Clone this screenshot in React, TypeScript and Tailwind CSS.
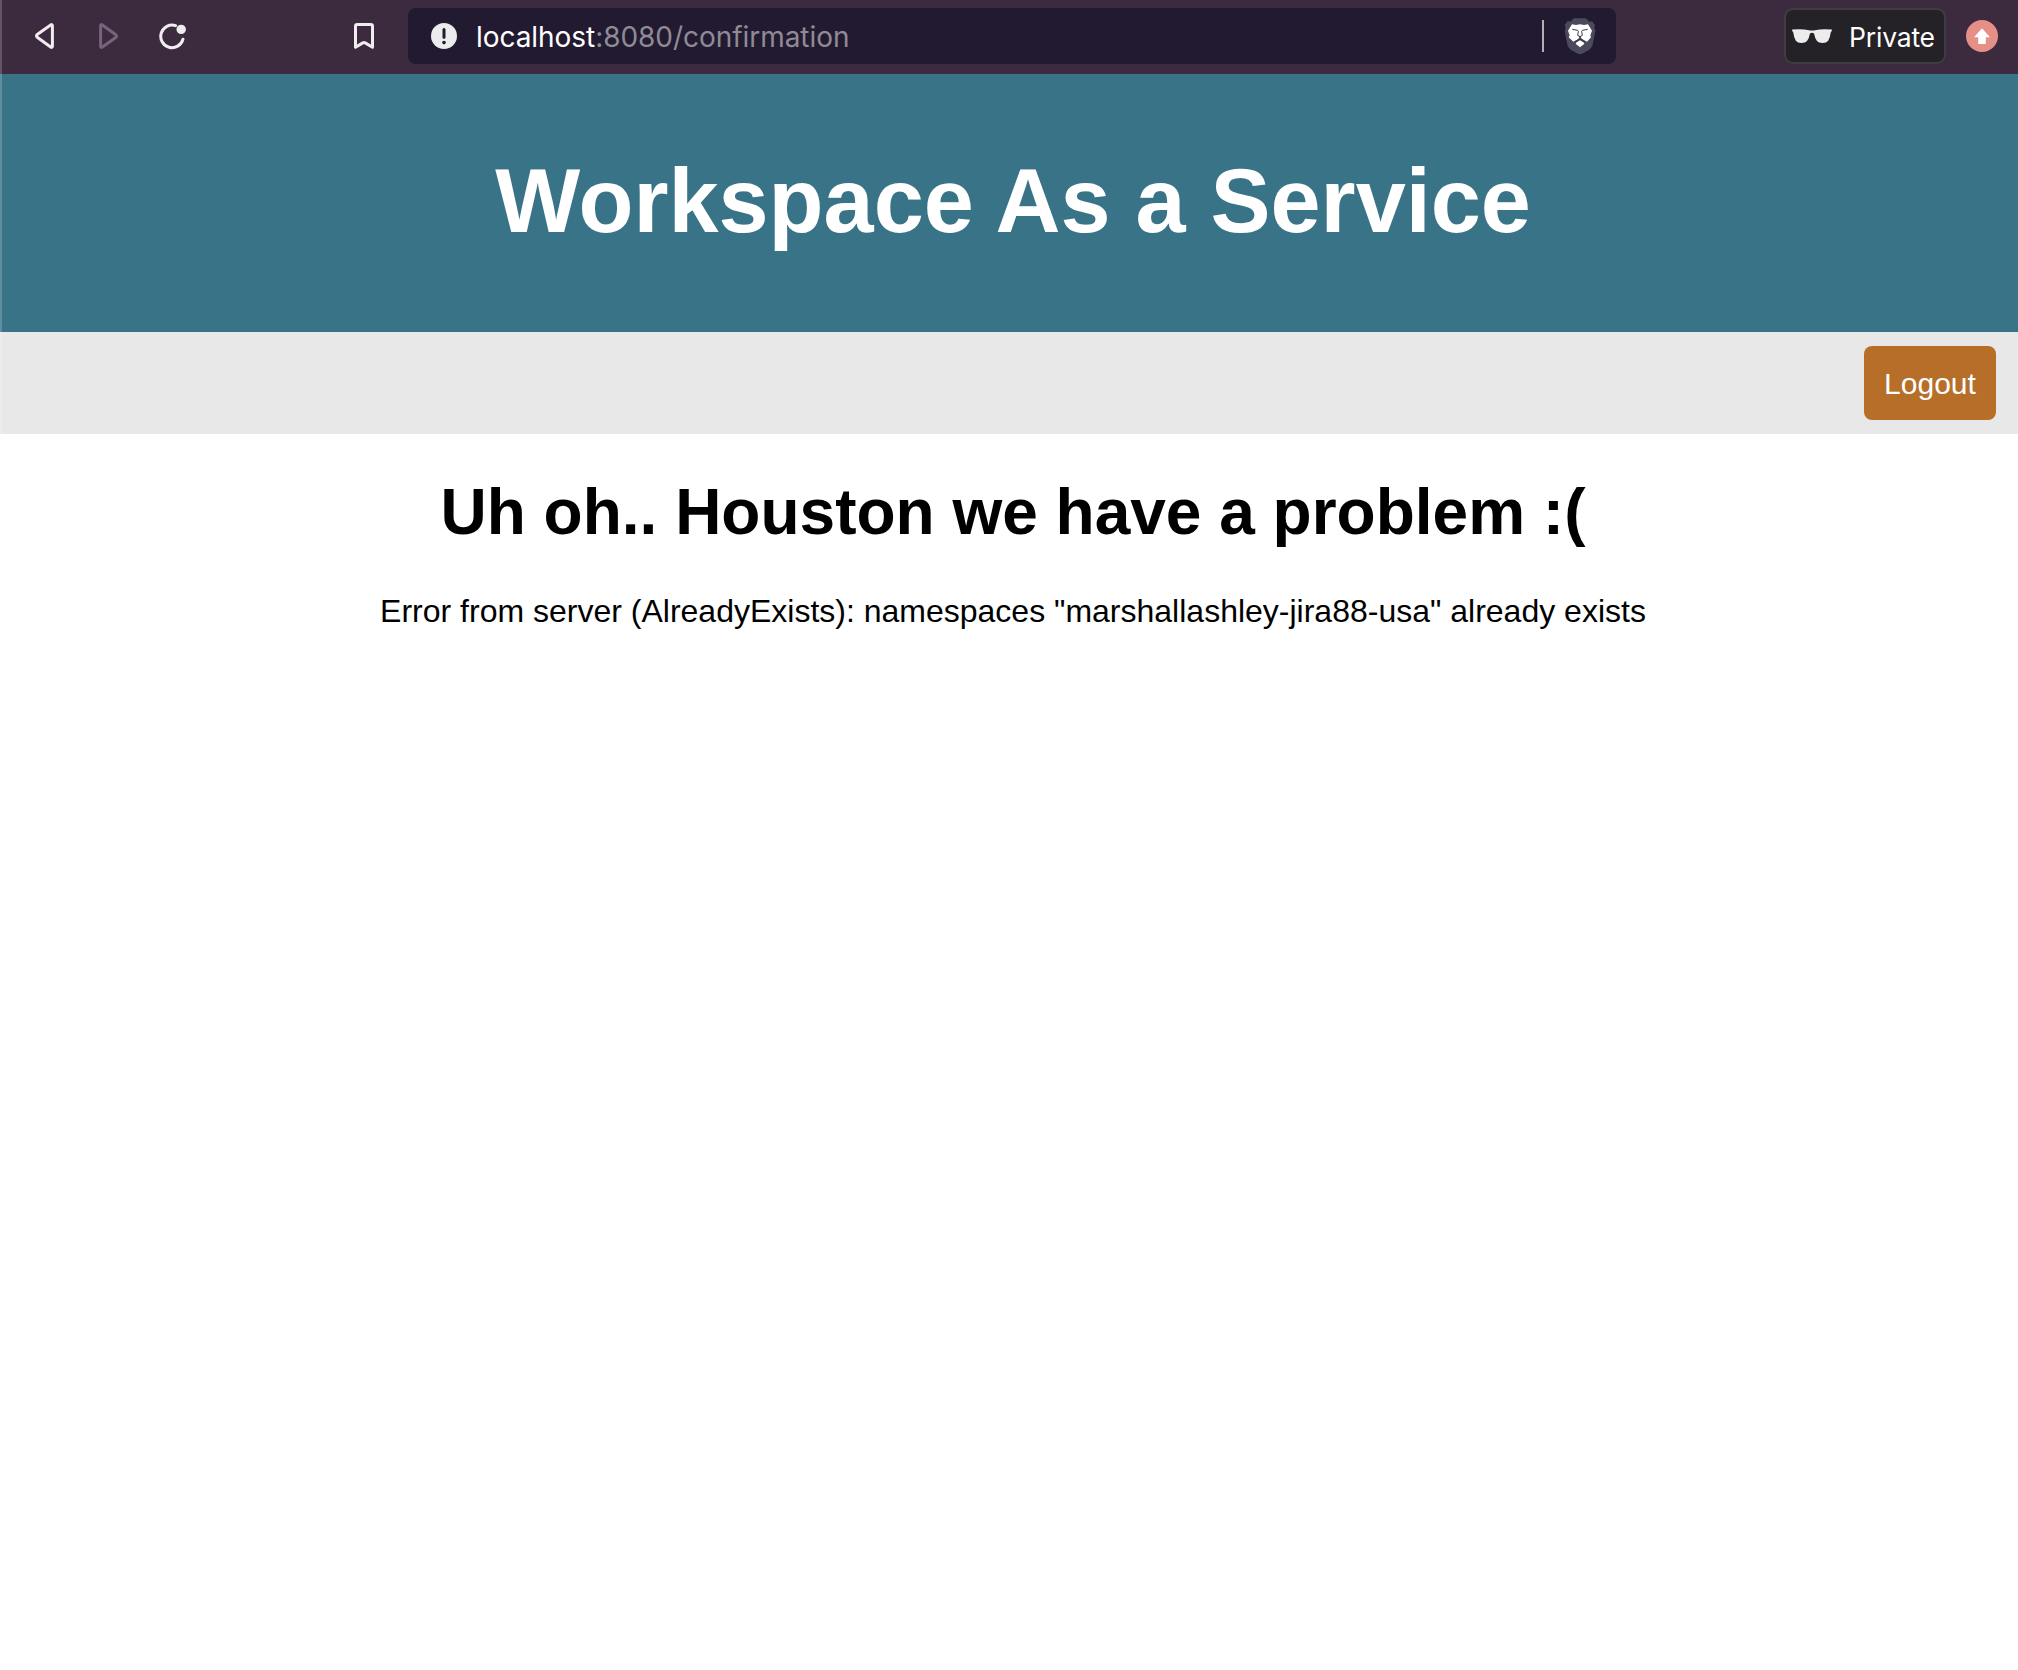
import React from "react";

function BackIcon({ className }: { className: string }) {
  return (
    <svg viewBox="0 0 20 28" className={className} fill="none" stroke="currentColor" strokeWidth="3" strokeLinejoin="round" strokeLinecap="round">
      <path d="M18.4 3.6a.9.9 0 0 0-1.4-.8L3.2 12.4a1.7 1.7 0 0 0 0 2.8L17 25.2a.9.9 0 0 0 1.4-.8Z" />
    </svg>
  );
}

function ReloadIcon() {
  return (
    <svg viewBox="0 0 30 28" className="ml-[38px] h-7 w-[30px] text-[#f0ecf0]" fill="none">
      <path d="M18.6 3.6A11.3 11.3 0 1 0 26 17.2" stroke="currentColor" strokeWidth="3" strokeLinecap="round" />
      <circle cx="24.2" cy="7.4" r="4.7" fill="currentColor" />
    </svg>
  );
}

function BookmarkIcon() {
  return (
    <svg viewBox="0 0 20 28" className="ml-[167px] h-7 w-5 text-[#f0ecf0]" fill="none" stroke="currentColor" strokeWidth="3" strokeLinejoin="round">
      <path d="M1.5 4.2Q1.5 2.5 3.2 2.5H16.8Q18.5 2.5 18.5 4.2V25.3L11.2 20.9Q10 20.2 8.8 20.9L1.5 25.3Z" />
    </svg>
  );
}

function LionShield() {
  return (
    <svg viewBox="132 53 96 110" className="ml-5 h-[36.7px] w-8">
      <path fill="#4b4a5c" d="M162 54h36l10 10 8-1 9 12-2 7 3 10-9 46-10 11-21 11q-6 4-12 0l-22-12-9-10-9-46 3-10-3-8 9-12 8 2Z" />
      <path fill="#fff" d="M156 72l12 2 12-2 12 2 12-2 12 19-5 14 2 6-12 13-7-3-10-7-2-3 1-4q-6-2-6 0l2 4-2 3-10 7-7 3-14-13 3-6-5-14Z" />
      <path fill="#fff" d="M180 120l13 8-2 4-11 9-11-9-2-4Z" />
      <path fill="none" stroke="#3b394b" strokeWidth="3" strokeLinejoin="round" d="M157 87l16 3 2 3-2 12 7 4 7-4-2-12 2-3 16-3" />
      <path fill="none" stroke="#3b394b" strokeWidth="3.2" d="M180 107v8M163 124l17-8 17 8" />
    </svg>
  );
}

function GlassesIcon() {
  return (
    <svg viewBox="0 0 40 15" className="h-[15px] w-10" fill="#ececec">
      <path d="M.2 .6Q10 -.4 17 1.2Q20 2 23 1.2Q30-.4 39.8.6Q40.2 2.4 38.8 3.2Q38 9 36.2 11.8Q34.6 14 30.5 14Q26.5 14 25 12Q22.8 9 22 4.4Q20 3 18 4.4Q17.2 9 15 12Q13.5 14 9.5 14Q5.4 14 3.8 11.8Q2 9 1.2 3.2Q-.2 2.4 .2.6Z" />
    </svg>
  );
}

function BrowserBar() {
  return (
    <div className="flex h-[74px] items-start bg-[#3c2a3e] pt-2 font-['Inter',sans-serif]">
      <div className="flex h-14 items-center pl-[34px]">
        <BackIcon className="h-7 w-5 text-[#f0ecf0]" />
        <BackIcon className="ml-[45px] h-7 w-5 rotate-180 text-[#77637b]" />
        <ReloadIcon />
        <BookmarkIcon />
      </div>
      <div className="ml-[34px] flex h-14 w-[1208px] items-center rounded-lg bg-[#221a31] pl-[23px]">
        <svg viewBox="0 0 26 26" className="size-[26px]">
          <circle cx="13" cy="13" r="13" fill="#ececec" />
          <path d="M13 6.6v7.6" stroke="#221a31" strokeWidth="3" strokeLinecap="round" />
          <circle cx="13" cy="19.6" r="1.8" fill="#221a31" />
        </svg>
        <div className="ml-[19px] mt-px whitespace-nowrap text-[28px] leading-10 tracking-[-0.05px] text-[#8f8b95]">
          <span className="text-white">localhost</span>:8080/confirmation
        </div>
        <div className="ml-auto h-8 w-0.5 bg-[#b3b0b8]" />
        <LionShield />
        <div className="w-5" />
      </div>
      <div className="ml-[168px] flex h-14 w-[162px] items-center rounded-[9px] border-2 border-[#403c44] bg-[#242127] pl-1.5">
        <GlassesIcon />
        <span className="ml-[17px] mt-px text-[26.5px] leading-10 tracking-[-0.2px] text-white">Private</span>
      </div>
      <div className="ml-5 flex h-14 items-center">
        <svg viewBox="0 0 32 32" className="size-8">
          <circle cx="16" cy="16" r="16" fill="#e58f87" />
          <path d="M16 8.2l8 9h-4.2v6.9h-7.6v-6.9H8Z" fill="#fff" />
        </svg>
      </div>
    </div>
  );
}

export default function App() {
  return (
    <div className="relative flex min-h-[1670px] w-[2018px] flex-col overflow-hidden bg-white font-['Liberation_Sans',Arial,sans-serif]">
      <BrowserBar />
      <header className="flex h-[258px] items-center justify-center bg-[#397388] pb-1 pl-2">
        <h1 className="text-[90px] font-bold leading-none text-white">Workspace As a Service</h1>
      </header>
      <nav className="flex h-[102px] items-center justify-end bg-[#e8e8e8] pr-[22px]">
        <button className="h-[74px] w-[132px] rounded-lg bg-[#b76e29] text-[30px] text-white">Logout</button>
      </nav>
      <main className="flex flex-col items-center pl-2 pt-[41px] text-black">
        <h2 className="text-[64px] font-bold leading-[74px]">Uh oh.. Houston we have a problem :(</h2>
        <p className="mt-11 text-[32px] leading-9">
          Error from server (AlreadyExists): namespaces "marshallashley-jira88-usa" already exists
        </p>
      </main>
      <div className="absolute left-0 top-0 h-[434px] w-0.5 bg-white/20" />
    </div>
  );
}
